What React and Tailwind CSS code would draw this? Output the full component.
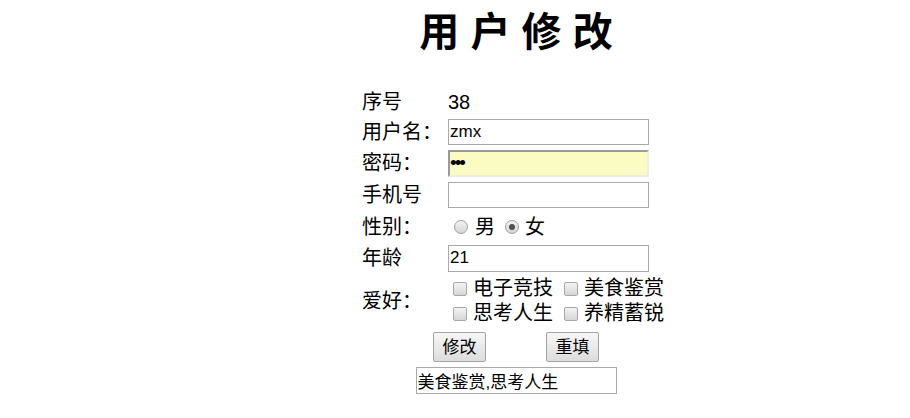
import React from "react";

const font = "font-['Liberation_Sans','Noto_Sans_CJK_SC',sans-serif]";

const Radio = ({ checked }) => (
    <span className="inline-flex h-[14px] w-[14px] shrink-0 items-center justify-center rounded-full border border-[#a0a0a0] bg-linear-to-b from-[#f3f3f3] to-[#d4d4d4]">
        {checked && <span className="h-[6px] w-[6px] rounded-full bg-[#505050]" />}
    </span>
)

const Check = () => (
    <span className="inline-block h-[14px] w-[14px] shrink-0 rounded-[2px] border border-[#a8a8a8] bg-linear-to-b from-[#f3f3f3] to-[#d6d6d6]" />
)

const Hobby = ({ label, first }) => (
    <span className={first ? "flex items-center" : "ml-[11px] flex items-center"}>
        <Check />
        <span className="ml-[6px]">{label}</span>
    </span>
)

const Row = ({ label, h, children }) => (
    <div className={"grid grid-cols-[86px_1fr] items-center " + h}>
        <div className="leading-none">{label}</div>
        <div className="flex items-center">{children}</div>
    </div>
)

const App = () => {
    return <div className={"min-h-screen bg-white pl-[122px] text-black " + font}>
        <div className="mx-auto w-[308px]">
            <h1 className="pt-[12px] text-center text-[40px] font-bold leading-[40px]">用 户 修 改</h1>

            <div className="mt-[34px] text-[20px]">
                <Row label="序号" h="h-[31px]">
                    <span className="leading-none">38</span>
                </Row>
                <Row label="用户名：" h="h-[29px]">
                    <input readOnly value="zmx" className="h-[26px] w-[201px] border border-[#a9a9a9] px-[1px] text-[17px] outline-none" />
                </Row>
                <Row label="密码：" h="h-[34px]">
                    <input readOnly type="password" value="123" className="h-[27px] w-[201px] border-2 border-t-[#9a9a9a] border-l-[#9a9a9a] border-b-[#ececec] border-r-[#ececec] bg-[#fafcc2] px-0 text-[19px] tracking-[-2px] outline-none" />
                </Row>
                <Row label="手机号" h="h-[30px]">
                    <input readOnly value="" className="h-[26px] w-[201px] border border-[#a9a9a9] px-[1px] text-[17px] outline-none" />
                </Row>
                <Row label="性别：" h="h-[34px]">
                    <span className="ml-[6px] flex items-center">
                        <Radio />
                        <span className="ml-[7px] leading-none">男</span>
                        <span className="ml-[10px] flex"><Radio checked /></span>
                        <span className="ml-[6px] leading-none">女</span>
                    </span>
                </Row>
                <Row label="年龄" h="h-[28px]">
                    <input readOnly value="21" className="h-[27px] w-[201px] border border-[#a9a9a9] px-[1px] text-[17px] outline-none" />
                </Row>
                <Row label="爱好：" h="h-[58px]">
                    <div className="ml-[5px] flex flex-col leading-[25px]">
                        <div className="flex">
                            <Hobby first label="电子竞技" />
                            <Hobby label="美食鉴赏" />
                        </div>
                        <div className="flex">
                            <Hobby first label="思考人生" />
                            <Hobby label="养精蓄锐" />
                        </div>
                    </div>
                </Row>

                <div className="flex h-[34px] items-center justify-center gap-[60px]">
                    <button className="h-[30px] w-[53px] rounded-[2px] border border-[#a3a3a3] bg-linear-to-b from-[#f7f7f7] to-[#dcdcdc] text-[17px] leading-none">修改</button>
                    <button className="h-[30px] w-[53px] rounded-[2px] border border-[#a3a3a3] bg-linear-to-b from-[#f7f7f7] to-[#dcdcdc] text-[17px] leading-none">重填</button>
                </div>
                <div className="flex justify-center pt-[3px]">
                    <input readOnly value="美食鉴赏,思考人生" className="h-[27px] w-[201px] border border-[#a9a9a9] px-[1px] text-[17px] outline-none" />
                </div>
            </div>
        </div>
    </div>
}

export default App
